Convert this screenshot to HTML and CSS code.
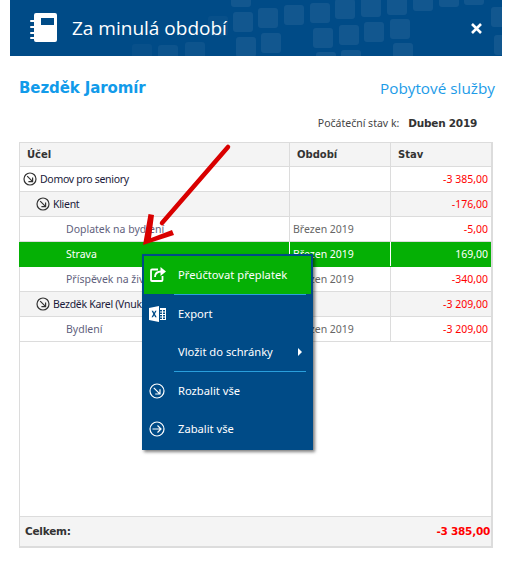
FILE: index.html
```html
<!DOCTYPE html>
<html lang="cs">
<head>
<meta charset="utf-8">
<title>Za minulá období</title>
<link rel="stylesheet" href="styles.css">
</head>
<body>
<div class="dialog">
	<div class="dialog-head">
		<svg class="tiles" width="492" height="56" viewBox="10 0 492 56" fill="#fff" fill-opacity=".07">
			<rect x="258" y="8" width="20" height="20" rx="3"/><rect x="284" y="5" width="20" height="20" rx="3"/>
			<rect x="310" y="3" width="20" height="20" rx="3"/><rect x="335" y="-1" width="20" height="20" rx="3"/>
			<rect x="361" y="-3" width="20" height="20" rx="3"/><rect x="387" y="-5" width="20" height="20" rx="3"/>
			<rect x="413" y="-9" width="20" height="20" rx="3"/><rect x="439" y="-13" width="20" height="20" rx="3"/>
			<rect x="464" y="-15" width="20" height="20" rx="3"/><rect x="491" y="7" width="20" height="20" rx="3"/>
			<rect x="261" y="33" width="20" height="20" rx="3"/><rect x="313" y="28" width="20" height="20" rx="3"/>
			<rect x="339" y="25" width="20" height="20" rx="3"/><rect x="364" y="22" width="20" height="20" rx="3"/>
			<rect x="390" y="19" width="20" height="20" rx="3"/><rect x="494" y="35" width="20" height="20" rx="3"/>
			<rect x="316" y="52" width="20" height="20" rx="3"/><rect x="341" y="50" width="20" height="20" rx="3"/>
			<rect x="393" y="43" width="20" height="20" rx="3"/><rect x="231" y="-13" width="20" height="20" rx="3"/>
			<rect x="233" y="12" width="20" height="20" rx="3"/><rect x="236" y="37" width="20" height="20" rx="3"/>
			<rect x="208" y="16" width="20" height="20" rx="3" fill-opacity=".03"/><rect x="185" y="42" width="20" height="20" rx="3" fill-opacity=".05"/>
			<rect x="158" y="45" width="20" height="20" rx="3" fill-opacity=".05"/><rect x="132" y="44" width="20" height="20" rx="3" fill-opacity=".03"/>
		</svg>
		<svg class="head-icon" width="27" height="29" viewBox="0 0 27 29">
			<path fill="#fff" fill-rule="evenodd" d="M4 2a2 2 0 0 1 2-2h19a2 2 0 0 1 2 2v25a2 2 0 0 1-2 2H6a2 2 0 0 1-2-2zM11 5v7h13V5z"/>
			<path fill="none" stroke="#fff" stroke-width="2" stroke-linecap="round" d="M1 8h4M1 14h4M1 20h4M1 25h4"/>
		</svg>
		<h1 class="dialog-title">Za minulá období</h1>
		<svg class="close" width="11" height="11" viewBox="0 0 11 11"><path stroke="#fff" stroke-width="2.6" d="M1 1l9 9M10 1l-9 9"/></svg>
	</div>

	<div class="dialog-body">
		<div class="title-row">
			<h2 class="person">Bezděk Jaromír</h2>
			<span class="service">Pobytové služby</span>
		</div>
		<div class="state-row">
			<span>Počáteční stav k:</span>
			<b>Duben 2019</b>
		</div>

		<table class="grid">
			<colgroup><col class="col-name"><col class="col-period"><col class="col-state"></colgroup>
			<thead>
				<tr><th>Účel</th><th>Období</th><th>Stav</th></tr>
			</thead>
			<tbody>
				<tr class="level-0">
					<td><span class="tree"><svg class="expander" width="14" height="14" viewBox="0 0 14 14"><circle cx="7" cy="7" r="6" fill="none" stroke="#333" stroke-width="1.2"/><path fill="none" stroke="#333" stroke-width="1.2" d="M4.2 4.2l5 5M9.6 5.4v4.2H5.4"/></svg>Domov pro seniory</span></td>
					<td></td><td class="money neg">-3 385,00</td>
				</tr>
				<tr class="level-1">
					<td><span class="tree"><svg class="expander" width="14" height="14" viewBox="0 0 14 14"><circle cx="7" cy="7" r="6" fill="none" stroke="#333" stroke-width="1.2"/><path fill="none" stroke="#333" stroke-width="1.2" d="M4.2 4.2l5 5M9.6 5.4v4.2H5.4"/></svg>Klient</span></td>
					<td></td><td class="money neg">-176,00</td>
				</tr>
				<tr class="level-2">
					<td>Doplatek na bydlení</td><td class="period">Březen 2019</td><td class="money neg">-5,00</td>
				</tr>
				<tr class="level-2 selected">
					<td>Strava</td><td class="period">Březen 2019</td><td class="money">169,00</td>
				</tr>
				<tr class="level-2">
					<td>Příspěvek na živobytí</td><td class="period">Březen 2019</td><td class="money neg">-340,00</td>
				</tr>
				<tr class="level-1">
					<td><span class="tree"><svg class="expander" width="14" height="14" viewBox="0 0 14 14"><circle cx="7" cy="7" r="6" fill="none" stroke="#333" stroke-width="1.2"/><path fill="none" stroke="#333" stroke-width="1.2" d="M4.2 4.2l5 5M9.6 5.4v4.2H5.4"/></svg>Bezděk Karel (Vnuk)</span></td>
					<td></td><td class="money neg">-3 209,00</td>
				</tr>
				<tr class="level-2">
					<td>Bydlení</td><td class="period">Březen 2019</td><td class="money neg">-3 209,00</td>
				</tr>
				<tr class="filler"><td colspan="3"></td></tr>
			</tbody>
			<tfoot>
				<tr><td colspan="2">Celkem:</td><td class="money neg">-3 385,00</td></tr>
			</tfoot>
		</table>
	</div>
</div>

<!-- sipka pres tabulku -->
<svg class="arrow" width="100" height="112" viewBox="0 0 100 112">
	<path fill="none" stroke="#d90000" stroke-width="4.5" stroke-linecap="round" d="M90 4L24 80"/>
	<path fill="#d90000" d="M10.500 71L16 72L13 95L34 87L36 92L5 102Z"/>
</svg>

<ul class="menu">
	<li class="menu-item active">
		<svg class="menu-icon" width="16" height="15" viewBox="0 0 16 15"><path fill="none" stroke="#fff" stroke-width="1.800" d="M8 2.500H2a1 1 0 0 0-1 1V13a1 1 0 0 0 1 1h9.500a1 1 0 0 0 1-1V9"/><path fill="none" stroke="#fff" stroke-width="1.800" d="M5 10c0-3.500 2.500-5.500 6.500-5.500"/><path fill="#fff" d="M10.500 0l5.500 4.500-5.500 4.500z"/></svg>
		Přeúčtovat přeplatek
	</li>
	<li class="menu-sep"></li>
	<li class="menu-item">
		<svg class="menu-icon" width="17" height="16" viewBox="0 0 17 16"><path fill="#fff" d="M0 2l10-2v16L0 14z"/><path fill="#004b87" d="M2.600 4.700h1.500l1 2 1.100-2h1.400L5.900 8l1.800 3.300H6.200L5.100 9.200 4 11.300H2.500L4.300 8z"/><path fill="#fff" d="M11 2h6v12h-6v-1h2v-1.500h-2v-1h2V9h-2V8h2V6.500h-2v-1h2V4h-2zM14 4v1.500h2V4zM14 6.500V8h2V6.500zM14 9v1.500h2V9zM14 11.500V13h2v-1.500z"/></svg>
		Export
	</li>
	<li class="menu-item has-sub">Vložit do schránky<span class="sub-arrow"></span></li>
	<li class="menu-sep"></li>
	<li class="menu-item">
		<svg class="menu-icon" width="16" height="16" viewBox="0 0 16 16"><circle cx="8" cy="8" r="7" fill="none" stroke="#fff" stroke-width="1.200"/><path fill="none" stroke="#fff" stroke-width="1.200" d="M4.800 4.800l6 6M11 6.200v4.800H6.200"/></svg>
		Rozbalit vše
	</li>
	<li class="menu-item">
		<svg class="menu-icon" width="16" height="16" viewBox="0 0 16 16"><circle cx="8" cy="8" r="7" fill="none" stroke="#fff" stroke-width="1.200"/><path fill="none" stroke="#fff" stroke-width="1.200" d="M3.500 8h8.500M8.500 4.500L12 8l-3.500 3.500"/></svg>
		Zabalit vše
	</li>
</ul>
</body>
</html>
```

FILE: styles.css
```css
html, body { margin: 0; padding: 0; background: #fff; }
body { width: 512px; height: 565px; overflow: hidden; position: relative; font-family: "Noto Sans", Tahoma, sans-serif; font-size: 10.5px; color: #333; }

.dialog { margin-left: 10px; width: 492px; }
.dialog-head { height: 56px; background: #004b87; display: flex; align-items: center; padding-left: 20px; box-sizing: border-box; position: relative; overflow: hidden; }
.tiles { position: absolute; left: 0; top: 0; }
.head-icon { position: relative; margin-top: -1px; }
.dialog-title { position: relative; margin: 0 0 0 15px; font: normal 19px "Open Sans", sans-serif; color: #fff; flex: 1; }
.close { position: relative; margin-right: 20px; }

.dialog-body { padding: 0 8px 0 9px; }
.title-row { display: flex; justify-content: space-between; align-items: center; height: 22px; margin-top: 21px; }
.person { margin: 0; font: bold 15px "DejaVu Sans", sans-serif; color: #129bea; letter-spacing: -.1px; }
.service { font: 15.3px "Open Sans", sans-serif; color: #1d9ce8; margin-right: -1px; }
.state-row { display: flex; justify-content: flex-end; gap: 9px; margin-top: 16px; height: 16px; line-height: 16px; padding-right: 17px; color: #444; }
.state-row b { color: #333; font: bold 10.5px/16px "DejaVu Sans", sans-serif; letter-spacing: -.25px; }

.grid { margin-top: 11px; width: 474px; height: 406px; table-layout: fixed; border-collapse: collapse; border: 2px solid #dcdcdc; border-width: 1px 2px 2px 1px; }
.col-name { width: 270px; }
.col-period { width: 101px; }
.grid th { height: 23px; padding: 0 7px; text-align: left; background: #f4f4f4; border: 1px solid #dcdcdc; font: bold 10px "DejaVu Sans", sans-serif; color: #333; }
.grid td { height: 25px; padding: 0 3px 1px 7px; box-sizing: border-box; border: 1px solid #dcdcdc; white-space: nowrap; overflow: hidden; }
.tree { display: flex; align-items: center; gap: 3px; color: #1a1a3a; letter-spacing: -.3px; }
.tree svg { margin-top: 1px; }
.level-0 td:first-child { padding-left: 3px; }
.level-1 td { background: #f4f4f4; }
.level-1 td:first-child { padding-left: 16px; }
.level-2 td { color: #5f5f7d; }
.level-2 td:first-child { padding-left: 46px; }
.period { color: #666 !important; padding-left: 3px !important; }
.money { text-align: right; }
.neg { color: #f00 !important; }
.selected td { background: #05b005; color: #fff !important; border-color: #05b005 #fff #05b005 #05b005; }
.selected td:last-child { border-right-color: #05b005; }
.filler td { height: auto; }
.grid tfoot td { height: 31px; background: #f4f4f4; border: 0; border-top: 1px solid #dcdcdc; font: bold 10.5px "DejaVu Sans", sans-serif; letter-spacing: -.25px; color: #333; padding-left: 5px; padding-right: 1px; padding-bottom: 0; }

.arrow { position: absolute; left: 138px; top: 143px; }

.menu { position: absolute; left: 142px; top: 254px; width: 171px; height: 196px; margin: 0; padding: 2px 0 0; list-style: none; box-sizing: border-box; background: #004b87; box-shadow: 2px 2px 3px rgba(0,0,0,.5); color: #fff; font-size: 11.2px; }
.menu-item { height: 38px; box-sizing: border-box; padding-bottom: 2px; display: flex; align-items: center; padding-left: 36px; position: relative; }
.menu-item.active { background: #05b005; margin: 0 2px; padding-left: 34px; }
.menu-sep { height: 1px; margin: 0 7px 0 32px; background: #2a9fdc; }
.menu-icon { position: absolute; left: 7px; top: 11px; }
.active .menu-icon { left: 6px; }
.sub-arrow { position: absolute; right: 11px; top: 15px; border-left: 4px solid #fff; border-top: 4px solid transparent; border-bottom: 4px solid transparent; }
```
